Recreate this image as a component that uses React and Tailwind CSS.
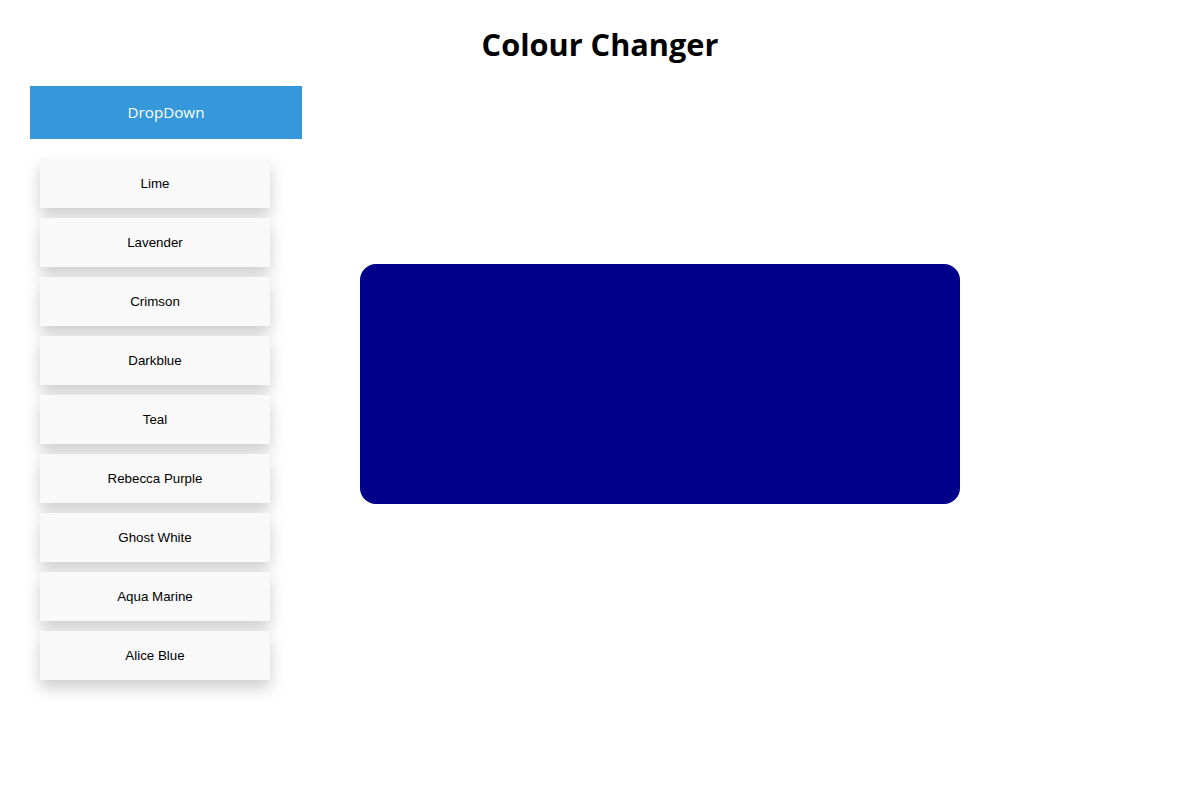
// App.jsx
import React, { useState } from 'react';

const colours = [
  { name: 'Lime', value: '#00ff00' },
  { name: 'Lavender', value: '#e6e6fa' },
  { name: 'Crimson', value: '#dc143c' },
  { name: 'Darkblue', value: '#00008b' },
  { name: 'Teal', value: '#008080' },
  { name: 'Rebecca Purple', value: '#663399' },
  { name: 'Ghost White', value: '#f8f8ff' },
  { name: 'Aqua Marine', value: '#7fffd4' },
  { name: 'Alice Blue', value: '#f0f8ff' },
];

const App = () => {
  const [open, setOpen] = useState(true);
  const [colour, setColour] = useState('#00008b');

  return (
    <div className="min-h-[800px] bg-white">
      <h1 className="pt-[24px] text-center text-[30.7px] leading-[40px] font-bold text-black font-['Open_Sans',sans-serif]">
        Colour Changer
      </h1>

      <div className="flex mt-[22px] pl-[30px]">
        <div className="w-[272px]">
          <button
            onClick={() => setOpen(!open)}
            className="w-full h-[53px] bg-[#3498db] text-white text-[15.2px] font-['Open_Sans',sans-serif]"
          >
            DropDown
          </button>

          {open && (
            <div className="ml-[10px] mt-[20px] w-[230px] flex flex-col gap-[10px]">
              {colours.map((c) => (
                <button
                  key={c.name}
                  onClick={() => setColour(c.value)}
                  className="h-[49px] bg-[#f9f9f9] text-black text-[13.333px] shadow-[0_8px_16px_0_rgba(0,0,0,0.2)] font-['Liberation_Sans',Arial,sans-serif]"
                >
                  {c.name}
                </button>
              ))}
            </div>
          )}
        </div>

        <div
          className="ml-[58px] mt-[178px] w-[600px] h-[240px] rounded-[16px]"
          style={{ backgroundColor: colour }}
        />
      </div>
    </div>
  );
};

export default App;
